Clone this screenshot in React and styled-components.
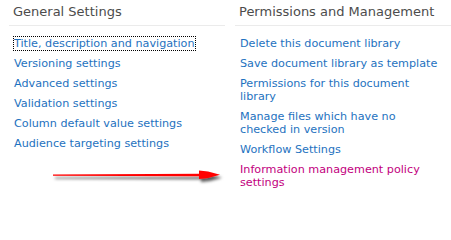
import React from "react";
import styled, { createGlobalStyle } from "styled-components";

const general = [
  "Title, description and navigation",
  "Versioning settings",
  "Advanced settings",
  "Validation settings",
  "Column default value settings",
  "Audience targeting settings",
];

const permissions = [
  { label: "Delete this document library" },
  { label: "Save document library as template" },
  { label: "Permissions for this document library" },
  { label: "Manage files which have no checked in version" },
  { label: "Workflow Settings" },
  { label: "Information management policy settings", visited: true },
];

export default function App() {
  return (
    <>
      <GlobalStyle />
      <Page>
        <Column>
          <Heading>General Settings</Heading>
          <LinkList>
            {general.map((label, i) => (
              <Item key={label}>
                <SettingLink href="#" $focused={i === 0}>
                  {label}
                </SettingLink>
              </Item>
            ))}
          </LinkList>
        </Column>

        <Column>
          <Heading>Permissions and Management</Heading>
          <LinkList>
            {permissions.map((item) => (
              <Item key={item.label}>
                <SettingLink href="#" $visited={item.visited}>
                  {item.label}
                </SettingLink>
              </Item>
            ))}
          </LinkList>
        </Column>

        <Arrow viewBox="0 0 180 20" aria-hidden="true">
          <defs>
            <filter id="arrowShadow" x="-10%" y="-50%" width="120%" height="250%">
              <feDropShadow dx="2" dy="3" stdDeviation="1.5" floodColor="#000" floodOpacity="0.65" />
            </filter>
          </defs>
          <g filter="url(#arrowShadow)">
            <path d="M1 8.4 L150 7.8 L150 10.2 L1 9.8 Z" fill="#f00" />
            <path d="M147 4.5 L156 5.5 L168 8.8 L156 12 L147 13 Z" fill="#f00" />
          </g>
        </Arrow>
      </Page>
    </>
  );
}

const GlobalStyle = createGlobalStyle`
  body {
    margin: 0;
    background: #fff;
    font-family: "DejaVu Sans", Verdana, sans-serif;
  }
`;

const Page = styled.div`
  position: relative;
  display: grid;
  grid-template-columns: 216px 216px;
  column-gap: 10px;
  padding-left: 9px;
  width: 451px;
  height: 200px;
  box-sizing: border-box;
  overflow: hidden;
`;

const Column = styled.section`
  display: flex;
  flex-direction: column;
  min-width: 0;
`;

const Heading = styled.h3`
  margin: 0;
  padding: 4px 0 5px 4px;
  font-size: 13px;
  font-weight: normal;
  line-height: 16px;
  color: #4c4c4c;
  border-bottom: 1px solid #ebebeb;
`;

const LinkList = styled.ul`
  list-style: none;
  margin: 0;
  padding: 11px 0 0 5px;
  width: 203px;
`;

const Item = styled.li`
  font-size: 11.2px;
  line-height: 13px;
  margin-bottom: 7px;
`;

const SettingLink = styled.a`
  text-decoration: none;
  color: ${(p) => (p.$visited ? "#c2007e" : "#1e72c0")};
  outline: ${(p) => (p.$focused ? "1px dotted #000" : "none")};
  outline-offset: 0;
`;

const Arrow = styled.svg`
  position: absolute;
  left: 52px;
  top: 166px;
  width: 180px;
  height: 20px;
  overflow: visible;
`;
